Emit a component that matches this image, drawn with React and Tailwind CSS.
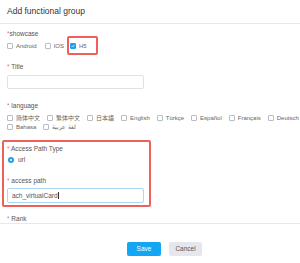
import React from "react";

const Check = ({ checked }) => (
  <span
    className={`inline-flex items-center justify-center w-[6px] h-[6px] rounded-[1px] border ${checked ? "bg-[#1a9ff0] border-[#1a9ff0]" : "bg-white border-[#b8bcc4]"}`}
  >
    {checked && (
      <svg width="4" height="4" viewBox="0 0 4 4">
        <path d="M0.6 2 L1.6 3 L3.4 0.9" stroke="#fff" strokeWidth="0.8" fill="none" />
      </svg>
    )}
  </span>
);

const Option = ({ label, checked, gap = "mr-[7px]" }) => (
  <span className={`inline-flex items-center gap-[3px] ${gap}`}>
    <Check checked={checked} />
    <span className="text-[6px] leading-[8px] text-[#666]">{label}</span>
  </span>
);

const Label = ({ children, space = true }) => (
  <div className="text-[6.5px] leading-[8px] text-[#555] whitespace-nowrap">
    <span className="text-[#f56c6c]">*</span>
    {space ? " " : ""}
    {children}
  </div>
);

export default function App() {
  return (
    <div
      className="w-[300px] h-[263px] bg-white flex flex-col overflow-hidden"
      style={{ fontFamily: '"Liberation Sans", "Noto Sans CJK SC", sans-serif' }}
    >
      <div className="h-[24px] shrink-0 border-b border-[#e8e8e8] px-[7px] flex items-center text-[8.5px] text-[#333]">
        Add functional group
      </div>

      <div className="h-[199px] shrink-0 overflow-hidden pl-[7px] pt-[6px]">
        <Label space={false}>showcase</Label>
        <div className="mt-[4px] flex items-center h-[8px] whitespace-nowrap">
          <Option label="Android" gap="mr-[8px]" />
          <Option label="IOS" gap="mr-[6px]" />
          <span className="relative inline-flex">
            <Option label="H5" checked />
            <span className="absolute left-[-3px] top-[-6px] w-[31px] h-[19px] border-2 border-[#f0605a] rounded-[2px]" />
          </span>
        </div>

        <div className="mt-[13px]">
          <Label>Title</Label>
        </div>
        <div className="mt-[4px] w-[137px] h-[14px] border border-[#dfe1e6] rounded-[2px]" />

        <div className="mt-[13px]">
          <Label>language</Label>
        </div>
        <div className="mt-[4px] flex items-center h-[8px] whitespace-nowrap">
          <Option label="简体中文" />
          <Option label="繁体中文" />
          <Option label="日本語" />
          <Option label="English" />
          <Option label="Türkçe" />
          <Option label="Español" />
          <Option label="Français" />
          <Option label="Deutsch" gap="mr-0" />
        </div>
        <div className="mt-[1px] flex items-center h-[8px] whitespace-nowrap">
          <Option label="Bahasa" />
          <Option label="لغة عربية" />
        </div>

        <div className="mt-[9px] -ml-[5px] w-[149px] border-2 border-[#f0605a] rounded-[2px] pl-[3px] pt-[3px] pb-[2px]">
          <Label>Access Path Type</Label>
          <div className="mt-[3px] h-[8px] flex items-center gap-[4px] pl-[1px]">
            <span className="w-[6px] h-[6px] rounded-full bg-[#1a9ff0] flex items-center justify-center">
              <span className="w-[2px] h-[2px] rounded-full bg-white" />
            </span>
            <span className="text-[6.5px] leading-[8px] text-[#555]">url</span>
          </div>
          <div className="mt-[13px]">
            <Label>access path</Label>
          </div>
          <div className="mt-[3px] w-[137px] h-[15px] border border-[#a9d7f5] rounded-[2px] flex items-center pl-[4px] text-[6.5px] text-[#555]">
            ach_virtualCard
            <span className="w-px h-[7px] bg-[#333]" />
          </div>
        </div>

        <div className="mt-[8px]">
          <Label>Rank</Label>
        </div>
      </div>

      <div className="flex-1 border-t border-[#e8e8e8] pl-[127px] pt-[18px] flex items-start gap-[8px]">
        <button className="w-[34px] h-[14px] rounded-[2px] bg-[#12a6f3] text-white text-[6.5px]">
          Save
        </button>
        <button className="w-[33px] h-[14px] rounded-[2px] bg-[#e5e6ee] text-[#555] text-[6.5px]">
          Cancel
        </button>
      </div>
    </div>
  );
}
